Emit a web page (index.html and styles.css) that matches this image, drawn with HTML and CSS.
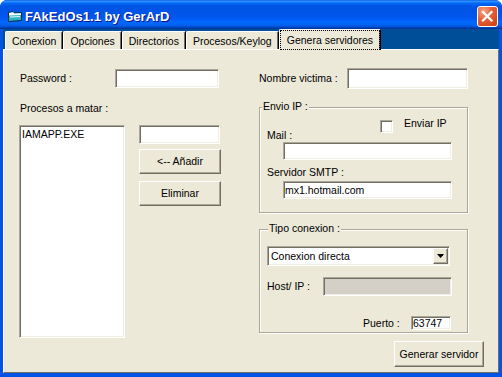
FILE: index.html
```html
<!DOCTYPE html>
<html>
<head>
    <meta charset="utf-8">
    <link rel="stylesheet" href="styles.css">
</head>
<body>
    <div class="window">

        <div class="titlebar">
            <svg class="app-icon" viewBox="0 0 16 16">
                <path d="M1.5 4.5 L6 3.5 L7.5 5 L14.5 4.5 L14.5 12.5 L1.5 13.5 Z" fill="#2bb3c0" stroke="#0b2a40"/>
                <path d="M2 5 L6 4.2 L7.3 5.5 L14 5.2 L14 7 L2 7.6 Z" fill="#fff"/>
                <path d="M3 9 L13 8.6" stroke="#e8fbff" stroke-width="1"/>
            </svg>
            <span class="title">FAkEdOs1.1 by GerArD</span>
            <div class="close">
                <svg viewBox="0 0 21 21" width="21" height="21">
                    <path d="M6 6 L14.5 14.5 M14.5 6 L6 14.5" stroke="#fff" stroke-width="2.2" stroke-linecap="square"/>
                </svg>
            </div>
        </div>

        <div class="tabs">
            <div class="tab">Conexion</div>
            <div class="tab">Opciones</div>
            <div class="tab">Directorios</div>
            <div class="tab">Procesos/Keylog</div>
            <div class="tab tab-active"><span class="focus">Genera servidores</span></div>
        </div>

        <div class="page">
            <div class="columns">

                <div class="col-left">
                    <div class="row">
                        <label class="pass-label" for="password">Password :</label>
                        <input class="field f-pass" type="text" id="password">
                    </div>

                    <div class="proc-label">Procesos a matar :</div>

                    <div class="proc-row">
                        <div class="listbox">
                            <div>IAMAPP.EXE</div>
                        </div>
                        <div class="proc-side">
                            <input class="field f-proc" type="text">
                            <button class="btn btn-add">&lt;-- Añadir</button>
                            <button class="btn btn-del">Eliminar</button>
                        </div>
                    </div>
                </div>

                <div class="col-right">
                    <div class="row">
                        <label class="nombre-label" for="nombre">Nombre victima :</label>
                        <input class="field f-nombre" type="text" id="nombre">
                    </div>

                    <div class="group group-envio">
                        <span class="legend">Envio IP :</span>
                        <div class="mail-head">
                            <span class="mail-label">Mail :</span>
                            <div class="check">
                                <span class="check-box"></span>
                                <span class="check-label">Enviar IP</span>
                            </div>
                        </div>
                        <input class="field f-mail" type="text">
                        <div class="smtp-label">Servidor SMTP :</div>
                        <input class="field f-smtp" type="text" value="mx1.hotmail.com">
                    </div>

                    <div class="group group-tipo">
                        <span class="legend legend-tipo">Tipo conexion :</span>
                        <div class="combo">
                            <span class="combo-text">Conexion directa</span>
                            <span class="combo-arrow">
                                <svg viewBox="0 0 7 4" width="7" height="4"><path d="M0 0 L7 0 L3.5 4 Z" fill="#000"/></svg>
                            </span>
                        </div>
                        <div class="host-row">
                            <span class="host-label">Host/ IP :</span>
                            <input class="field f-host" type="text" disabled>
                        </div>
                        <div class="port-row">
                            <span class="port-label">Puerto :</span>
                            <input class="field f-port" type="text" value="63747">
                        </div>
                    </div>
                </div>

            </div>

            <div class="footer">
                <button class="btn btn-gen">Generar servidor</button>
            </div>
        </div>

    </div>
</body>
</html>
```

FILE: styles.css
```css
*{
    box-sizing: border-box;
}

html, body{
    margin: 0;
}

body{
    background-color: #ffffff;
    font-family: "Liberation Sans", Arial, sans-serif;
    font-size: 10.5px;
    line-height: 13px;
    color: #000000;
}

.window{
    width: 502px;
    height: 377px;
    display: flex;
    flex-direction: column;
    background-color: #0453e4;
    border-radius: 7px 7px 0 0;
    overflow: hidden;
}

/* title bar */
.titlebar{
    height: 29px;
    flex: none;
    display: flex;
    align-items: center;
    padding: 3px 4px 0 7px;
    background: linear-gradient(to bottom, #0058ee 0%, #3593ff 4%, #288eff 6%, #127dff 8%, #036ffc 10%, #0262ee 14%, #0057e5 20%, #0054e3 24%, #0055eb 56%, #005bf5 66%, #026afe 76%, #0062ef 86%, #0052d6 92%, #0040ab 96%, #003092 100%);
}
.app-icon{
    width: 16px;
    height: 16px;
    flex: none;
}
.title{
    flex: 1;
    margin-left: 2px;
    color: #ffffff;
    font-weight: bold;
    font-size: 13px;
    text-shadow: 1px 1px #0f1089;
}
.close{
    width: 21px;
    height: 21px;
    flex: none;
    border: 1px solid #ffffff;
    border-radius: 3px;
    background: radial-gradient(circle at 30% 25%, #f3a88a 0%, #e5643b 40%, #d84a1f 75%, #c53d12 100%);
}
.close svg{
    display: block;
    margin: -1px;
}

/* tabs */
.tabs{
    height: 20px;
    flex: none;
    margin: 0 3px;
    padding-left: 2px;
    display: flex;
    align-items: flex-end;
    background-color: #004e98;
}
.tab{
    height: 18px;
    padding: 3px 6px 1px;
    background-color: #ece9d8;
    border-top: 1px solid #ffffff;
    border-left: 1px solid #ffffff;
    border-right: 1px solid #000000;
    border-radius: 2px 2px 0 0;
    box-shadow: inset -1px 0 #716f64;
    white-space: nowrap;
}
.tab-active{
    height: 21px;
    padding: 0;
    margin-bottom: -1px;
    position: relative;
    z-index: 1;
}
.focus{
    display: block;
    padding: 3px 6px 2px;
    border: 1px dotted #000000;
}

/* tab page */
.page{
    flex: 1;
    margin: 0 3px 4px;
    padding: 18px 14px 0 15px;
    display: flex;
    flex-direction: column;
    background-color: #ece9d8;
    border-top: 1px solid #ffffff;
    border-left: 1px solid #ffffff;
    border-right: 1px solid #716f64;
    border-bottom: 1px solid #716f64;
}
.columns{
    display: flex;
    align-items: flex-start;
}
.col-left{
    width: 202px;
    padding-top: 1px;
}
.col-right{
    width: 209px;
    margin-left: 38px;
}
.row{
    display: flex;
    align-items: center;
}

/* controls */
.field{
    display: block;
    margin: 0;
    padding: 0 1px;
    font: inherit;
    color: #000000;
    background-color: #ffffff;
    border: 1px solid;
    border-color: #aca899 #ffffff #ffffff #aca899;
    box-shadow: inset 1px 1px #716f64, inset -1px -1px #f1efe2;
    outline: none;
    -webkit-appearance: none;
}
.btn{
    display: block;
    margin: 0;
    padding: 0;
    font: inherit;
    color: #000000;
    background-color: #ece9d8;
    border: 1px solid;
    border-color: #ffffff #716f64 #716f64 #ffffff;
    box-shadow: inset -1px -1px #aca899;
}

/* left column */
.pass-label{
    width: 96px;
    padding-left: 1px;
}
.f-pass{
    width: 104px;
    height: 19px;
}
.proc-label{
    margin-top: 14px;
    padding-left: 1px;
}
.proc-row{
    display: flex;
    align-items: flex-start;
    margin-top: 10px;
}
.listbox{
    width: 106px;
    height: 213px;
    padding: 2px 1px;
    background-color: #ffffff;
    border: 1px solid;
    border-color: #aca899 #ffffff #ffffff #aca899;
    box-shadow: inset 1px 1px #716f64, inset -1px -1px #f1efe2;
}
.listbox div{
    padding-left: 1px;
}
.proc-side{
    width: 82px;
    margin-left: 14px;
}
.f-proc{
    width: 81px;
    height: 19px;
}
.btn-add, .btn-del{
    width: 82px;
    height: 25px;
}
.btn-add{
    margin-top: 5px;
}
.btn-del{
    margin-top: 7px;
}

/* right column */
.nombre-label{
    width: 88px;
}
.f-nombre{
    width: 121px;
    height: 21px;
}
.group{
    position: relative;
    border: 1px solid #aca899;
    box-shadow: inset 1px 1px #ffffff, 1px 1px #ffffff;
}
.group-envio{
    height: 106px;
    margin-top: 18px;
}
.group-tipo{
    height: 104px;
    margin-top: 16px;
}
.legend{
    position: absolute;
    top: -8px;
    left: 2px;
    padding: 0 1px;
    background-color: #ece9d8;
}
.legend-tipo{
    left: 8px;
}

.mail-head{
    display: flex;
    align-items: flex-start;
    padding-left: 7px;
}
.mail-label{
    margin-top: 21px;
}
.check{
    width: 87px;
    margin-left: auto;
    margin-top: 9px;
    display: flex;
    align-items: flex-start;
}
.check-box{
    width: 13px;
    height: 13px;
    margin-top: 3px;
    background-color: #ffffff;
    border: 1px solid;
    border-color: #aca899 #ffffff #ffffff #aca899;
    box-shadow: inset 1px 1px #716f64, inset -1px -1px #f1efe2;
}
.check-label{
    margin-left: 11px;
}
.f-mail, .f-smtp{
    width: 169px;
    height: 18px;
    margin-left: 23px;
}
.smtp-label{
    margin-top: 6px;
    padding-left: 7px;
}
.f-smtp{
    margin-top: 2px;
}

.combo{
    width: 183px;
    height: 20px;
    margin: 16px 0 0 7px;
    display: flex;
    background-color: #ffffff;
    border: 1px solid;
    border-color: #aca899 #ffffff #ffffff #aca899;
    box-shadow: inset 1px 1px #716f64, inset -1px -1px #f1efe2;
    padding: 1px;
}
.combo-text{
    flex: 1;
    padding-left: 2px;
    line-height: 16px;
}
.combo-arrow{
    width: 15px;
    height: 16px;
    display: flex;
    align-items: center;
    justify-content: center;
    background-color: #ece9d8;
    border: 1px solid;
    border-color: #ffffff #716f64 #716f64 #ffffff;
    box-shadow: inset -1px -1px #aca899;
}
.host-row{
    display: flex;
    align-items: center;
    margin-top: 11px;
    padding-left: 7px;
}
.host-label{
    width: 56px;
}
.f-host{
    width: 129px;
    height: 19px;
    background-color: #d4d0c8;
}
.port-row{
    display: flex;
    align-items: center;
    margin-top: 20px;
    padding-left: 103px;
}
.port-label{
    width: 48px;
}
.f-port{
    width: 40px;
    height: 14px;
    line-height: 12px;
}

/* bottom button */
.footer{
    display: flex;
    justify-content: flex-end;
    margin-top: 3px;
}
.btn-gen{
    width: 90px;
    height: 26px;
}
```
